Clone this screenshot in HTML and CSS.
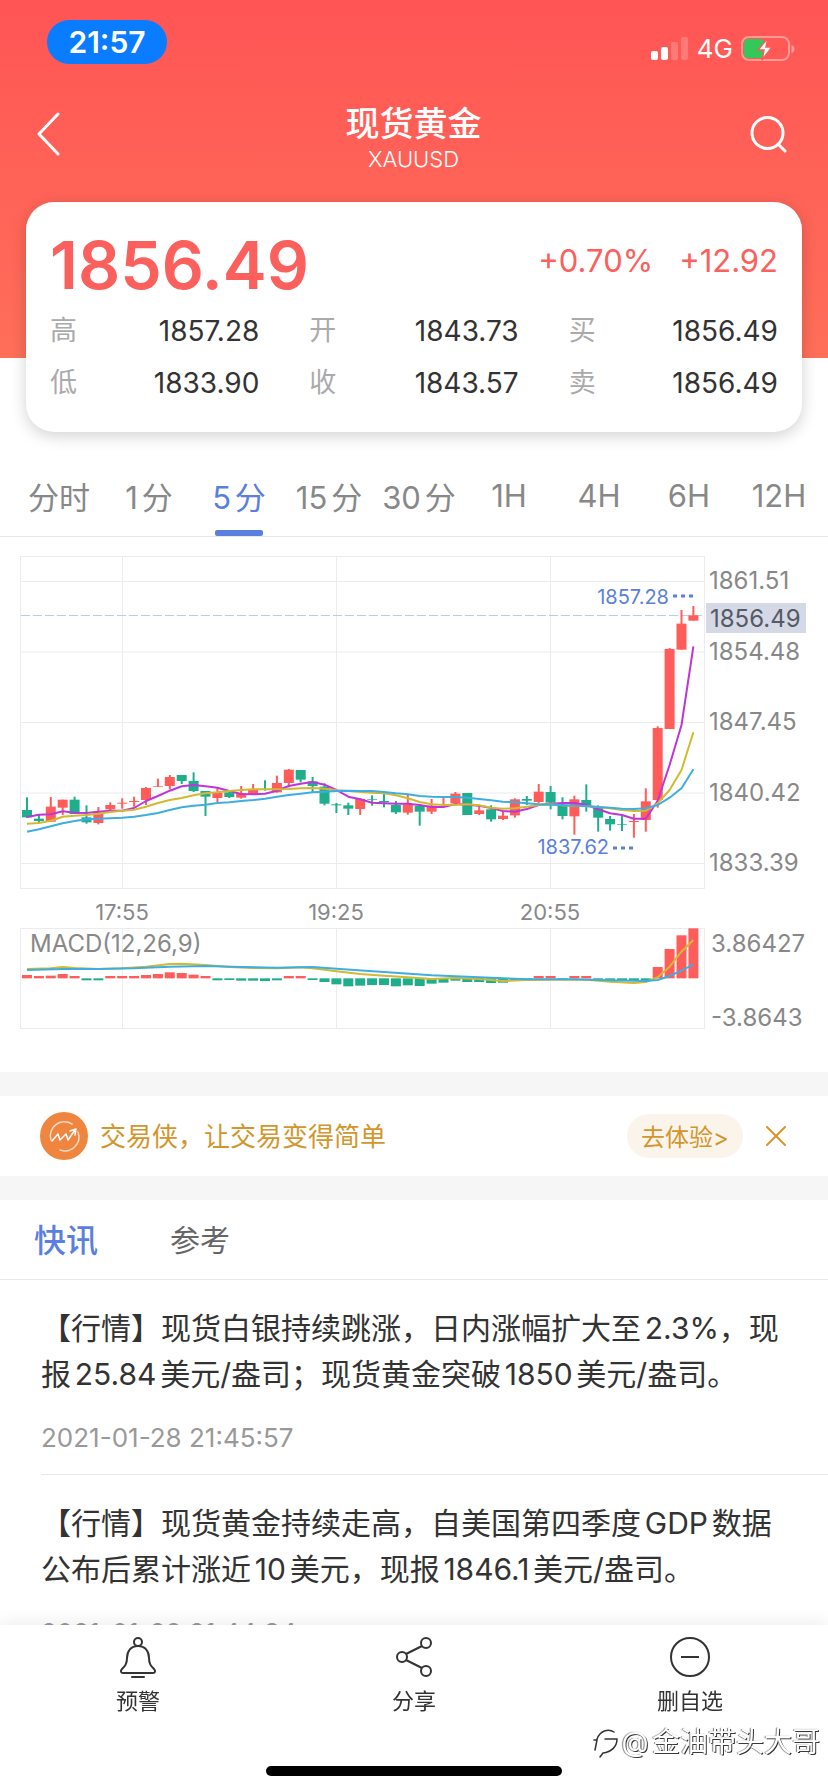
FILE: index.html
```html
<!DOCTYPE html>
<html lang="zh-CN">
<head>
    <meta charset="UTF-8">
    <meta name="viewport" content="width=device-width, initial-scale=1.0">
    <title>现货黄金 XAUUSD</title>
    <link rel="stylesheet" href="styles.css">
</head>
<body>
    <header class="top">
        <div class="status-bar">
            <span class="clock">21:57</span>
            <div class="status-icons">
                <svg width="38" height="24" viewBox="0 0 38 24" fill="#fff">
                    <rect x="0" y="14" width="7" height="9" rx="2"/>
                    <rect x="10" y="10" width="7" height="13" rx="2"/>
                    <rect x="20" y="5" width="7" height="18" rx="2" opacity=".2"/>
                    <rect x="30" y="0" width="7" height="23" rx="2" opacity=".2"/>
                </svg>
                <span class="network">4G</span>
                <svg width="54" height="26" viewBox="0 0 54 26">
                    <rect x="1" y="1" width="47" height="23" rx="7" fill="none" stroke="#fff" stroke-opacity=".4" stroke-width="2"/>
                    <rect x="3" y="3" width="20" height="19" rx="4" fill="#34c759"/>
                    <path d="M50.500 9v8q3-1 3-4t-3-4z" fill="#fff" opacity=".4"/>
                    <path d="M27 2 17 14h6l-2 10 10-13h-6z" fill="#fff" stroke="#ff5958" stroke-width="1.500"/>
                </svg>
            </div>
        </div>
        <nav class="nav-bar">
            <button class="icon-btn" type="button" aria-label="返回">
                <svg width="24" height="44" viewBox="0 0 24 44" fill="none" stroke="#fff" stroke-width="3" stroke-linecap="round" stroke-linejoin="round"><path d="M21 2 2 22l19 20"/></svg>
            </button>
            <div class="nav-title">
                <h1>现货黄金</h1>
                <p>XAUUSD</p>
            </div>
            <button class="icon-btn" type="button" aria-label="搜索">
                <svg width="38" height="38" viewBox="0 0 38 38" fill="none" stroke="#fff" stroke-width="3" stroke-linecap="round"><circle cx="17.500" cy="18" r="15.500"/><path d="m28 29 7 7"/></svg>
            </button>
        </nav>
    </header>

    <main>
        <section class="quote">
            <div class="quote-head">
                <strong class="price">1856.49</strong>
                <span class="change">+0.70%</span>
                <span class="change">+12.92</span>
            </div>
            <dl class="quote-grid">
                <div><dt>高</dt><dd>1857.28</dd></div>
                <div><dt>开</dt><dd>1843.73</dd></div>
                <div><dt>买</dt><dd>1856.49</dd></div>
                <div><dt>低</dt><dd>1833.90</dd></div>
                <div><dt>收</dt><dd>1843.57</dd></div>
                <div><dt>卖</dt><dd>1856.49</dd></div>
            </dl>
        </section>

        <div class="periods">
            <button type="button">分时</button>
            <button type="button">1分</button>
            <button type="button" class="active">5分</button>
            <button type="button">15分</button>
            <button type="button">30分</button>
            <button type="button">1H</button>
            <button type="button">4H</button>
            <button type="button">6H</button>
            <button type="button">12H</button>
        </div>

        <svg class="chart" viewBox="0 0 828 535">
            <g class="grid">
                <rect x="20.500" y="19.500" width="684" height="332"/>
                <path d="M21 44.500h683M21 115h683M21 185.500h683M21 256h683M21 326.500h683"/>
                <path d="M122.500 20v331M336.500 20v331M550.500 20v331"/>
                <rect x="20.500" y="391.500" width="684" height="100"/>
                <path d="M122.500 392v99M336.500 392v99M550.500 392v99"/>
            </g>
            <path class="last-line" d="M21 78.500h683"/>
            <g id="candles"></g>
            <g id="macd"></g>
            <g class="axis">
                <text x="709" y="52">1861.51</text>
                <text x="709" y="123">1854.48</text>
                <text x="709" y="193">1847.45</text>
                <text x="709" y="264">1840.42</text>
                <text x="709" y="334">1833.39</text>
                <rect class="last-box" x="706" y="66" width="100" height="30"/>
                <text class="last-text" x="710" y="90">1856.49</text>
                <text x="30" y="415">MACD(12,26,9)</text>
                <text x="711" y="415">3.86427</text>
                <text x="711" y="489">-3.8643</text>
            </g>
            <g class="times">
                <text x="122" y="383">17:55</text>
                <text x="336" y="383">19:25</text>
                <text x="550" y="383">20:55</text>
            </g>
            <g class="marks">
                <text x="669" y="67">1857.28</text>
                <path d="M673 59h20"/>
                <text x="609" y="317">1837.62</text>
                <path d="M613 311h20"/>
            </g>
        </svg>

        <aside class="promo">
            <svg width="48" height="48" viewBox="0 0 48 48" fill="none" stroke="#fff" stroke-linecap="round" stroke-linejoin="round">
                <circle cx="24" cy="24" r="24" fill="#f08540" stroke="none"/>
                <path d="M11 28A14 14 0 0 1 32 12M38 20A14 14 0 0 1 20 38" stroke-width="1.500" opacity=".7"/>
                <path d="m12 29 6-7 2 6 6-6 2 6L35 18M30 19l6-2-1 6" stroke-width="1.500"/>
            </svg>
            <p>交易侠，让交易变得简单</p>
            <button class="try-btn" type="button">去体验&gt;</button>
            <button class="icon-btn" type="button" aria-label="关闭">
                <svg width="20" height="20" viewBox="0 0 20 20" stroke="#d2962d" stroke-width="2" stroke-linecap="round"><path d="m1 1 18 18M19 1 1 19"/></svg>
            </button>
        </aside>

        <section class="news">
            <div class="news-tabs">
                <button type="button" class="active">快讯</button>
                <button type="button">参考</button>
            </div>
            <article class="news-item">
                <p>【行情】现货白银持续跳涨，日内涨幅扩大至2.3%，现报25.84美元/盎司；现货黄金突破1850美元/盎司。</p>
                <time>2021-01-28 21:45:57</time>
            </article>
            <article class="news-item">
                <p>【行情】现货黄金持续走高，自美国第四季度GDP数据公布后累计涨近10美元，现报1846.1美元/盎司。</p>
                <time>2021-01-28 21:44:34</time>
            </article>
        </section>
    </main>

    <footer class="toolbar">
        <div class="actions">
            <button type="button">
                <svg width="40" height="42" viewBox="0 0 40 42" fill="none" stroke="#333" stroke-width="2" stroke-linecap="round" stroke-linejoin="round"><circle cx="20" cy="6" r="4"/><path d="M20 10c-7 0-11 5-11 12 0 6-2 8-5 11-2 2-1 4 1 4h30c2 0 3-2 1-4-3-3-5-5-5-11 0-7-4-12-11-12zM14 41h12"/></svg>
                预警
            </button>
            <button type="button">
                <svg width="40" height="42" viewBox="0 0 40 42" fill="none" stroke="#333" stroke-width="2"><circle cx="8" cy="21" r="5"/><circle cx="32" cy="7" r="5"/><circle cx="32" cy="35" r="5"/><path d="m12 18 16-8M12 24l16 8"/></svg>
                分享
            </button>
            <button type="button">
                <svg width="40" height="42" viewBox="0 0 40 42" fill="none" stroke="#333" stroke-width="2"><circle cx="20" cy="21" r="19"/><path d="M11 21h18"/></svg>
                删自选
            </button>
        </div>
        <div class="home-indicator"></div>
        <div class="watermark">
            <svg width="26" height="32" viewBox="0 0 26 32" fill="none" stroke="#333" stroke-width="1.500" stroke-linecap="round"><path d="M2 24 4 14H1M4 13C7 5 15 2 21 6M12 13h12c0 8-6 13-14 14l-3 4"/></svg>
            @金油带头大哥
        </div>
    </footer>

    <script>
        // all y values are in thirds of a pixel
        const STEP = 11.9;
        const LEFT = 27;

        // [body top, body bottom, high, low, up]
        const candles = [
            [810,832,772,834,0],[836,843,825,850,0],[800,845,771,845,1],[779,803,779,825,1],[779,822,770,822,0],
            [832,847,796,851,0],[818,849,801,853,1],[795,808,787,812,1],[788,791,775,806,1],[783,786,770,800,1],
            [744,780,741,795,1],[739,741,716,741,1],[711,738,705,748,1],[705,723,705,732,0],[723,753,697,756,0],
            [753,770,753,828,0],[758,774,744,786,1],[757,771,755,774,0],[759,773,738,776,1],[750,762,732,765,1],
            [748,750,721,752,0],[729,757,707,758,1],[689,729,687,742,1],[690,719,690,727,0],[724,738,711,757,0],
            [740,791,730,796,0],[793,796,789,819,0],[796,806,788,825,0],[777,807,775,825,1],[777,779,766,797,0],
            [783,787,758,802,0],[795,817,783,822,0],[793,818,763,824,1],[797,815,795,857,0],[797,815,777,822,1],
            [792,794,770,796,1],[761,790,756,796,1],[759,825,759,825,0],[811,822,797,825,1],[808,838,796,845,0],
            [827,837,815,840,1],[778,826,775,833,1],[777,782,768,795,0],[755,786,732,790,1],[756,788,738,808,0],
            [797,828,772,838,0],[778,829,767,884,1],[780,796,733,815,0],[803,833,796,875,0],[837,853,828,872,0],
            [852,854,826,873,0],[843,846,822,893,1],[784,840,745,875,1],[564,780,559,803,1],[327,567,324,567,1],
            [251,329,210,329,1],[226,242,198,242,1]
        ];
        const ma5 = [831,824,823,814,818,819,815,812,812,804,783,768,752,739,735,739,743,753,762,763,761,752,738,731,726,734,750,770,778,788,790,791,791,795,801,801,792,794,797,804,813,815,807,795,791,789,789,794,808,820,825,836,836,782,675,555,319];
        const ma10 = [851,849,842,830,827,825,821,816,812,809,800,789,780,774,766,760,757,753,750,748,748,748,747,745,744,746,751,753,756,758,760,766,775,786,793,795,794,793,796,803,806,805,800,795,793,796,798,799,801,805,810,813,812,790,750,690,577];
        const ma20 = [875,868,859,850,843,838,836,835,833,830,825,819,810,802,797,794,789,787,783,780,776,770,765,761,757,755,753,752,753,753,756,760,763,768,770,771,771,773,777,781,785,787,790,793,794,795,797,798,801,803,806,807,805,795,773,745,688];

        const bars = [10,7,8,13,7,-6,-6,7,7,7,10,13,18,16,11,7,-6,-5,-7,-7,-8,-6,7,7,-5,-11,-18,-24,-22,-20,-20,-24,-21,-23,-16,-13,-7,-11,-11,-14,-13,-6,-4,7,7,-4,7,7,-5,-5,-5,-5,-5,34,88,129,150];
        // [index, y]
        const dif = [[0,207],[2,205],[3,201],[4,204],[6,207],[8,205],[10,200],[12,192],[13,191],[15,195],[17,201],[19,204],[21,205],[23,202],[24,205],[26,214],[28,222],[30,227],[32,232],[34,237],[36,234],[38,237],[40,243],[42,240],[44,239],[47,239],[49,245],[51,249],[52,246],[53,232],[54,200],[55,155],[56,120]];
        const dea = [[0,210],[3,207],[6,207],[9,205],[12,200],[15,198],[18,201],[21,203],[24,201],[26,206],[30,216],[34,226],[38,232],[42,238],[46,238],[49,241],[52,243],[53,240],[54,228],[55,212],[56,193]];

        const x = i => LEFT + i * STEP;
        const y = v => 3 + v / 3;
        const yMacd = v => 363 + v / 3;

        function line(points, scale, cls) {
            const list = points.map(p => x(p[0]).toFixed(1) + ',' + scale(p[1]).toFixed(1)).join(' ');
            return `<polyline class="line ${cls}" points="${list}"/>`;
        }

        function drawCandles() {
            let out = '';
            candles.forEach((c, i) => {
                const cls = c[4] ? 'up' : 'down';
                out += `<rect class="${cls}" x="${x(i) - 5}" y="${y(c[0])}" width="10" height="${(c[1] - c[0]) / 3}"/>`;
                out += `<rect class="${cls}" x="${x(i) - 1}" y="${y(c[2])}" width="2" height="${(c[3] - c[2]) / 3}"/>`;
            });
            out += line(ma5.map((v, i) => [i, v]), y, 'purple');
            out += line(ma10.map((v, i) => [i, v]), y, 'yellow');
            out += line(ma20.map((v, i) => [i, v]), y, 'blue');
            document.getElementById('candles').innerHTML = out;
        }

        function drawMacd() {
            let out = '';
            bars.forEach((v, i) => {
                const top = v > 0 ? 235 - v : 235;
                out += `<rect class="${v > 0 ? 'up' : 'down'}" x="${x(i) - 5}" y="${yMacd(top)}" width="10" height="${Math.abs(v) / 3}"/>`;
            });
            out += line(dif, yMacd, 'yellow');
            out += line(dea, yMacd, 'blue');
            document.getElementById('macd').innerHTML = out;
        }

        drawCandles();
        drawMacd();
    </script>
</body>
</html>
```
FILE: styles.css
```css
* {
    box-sizing: border-box;
}
body {
    margin: 0;
    padding-bottom: 110px;
    background-color: #fff;
    color: #333;
    font-family: Inter, "Noto Sans CJK SC", sans-serif;
    text-autospace: normal;
}
h1, p, dl, dd {
    margin: 0;
}
button {
    padding: 0;
    border: none;
    background: none;
    color: inherit;
    font: inherit;
    cursor: pointer;
}
svg {
    display: block;
}

/* header */
.top {
    height: 358px;
    padding-top: 20px;
    background: linear-gradient(#ff5555, #ff6f59);
    color: #fff;
}
.status-bar {
    display: flex;
    align-items: flex-start;
    justify-content: space-between;
    padding: 0 33px 0 47px;
}
.clock {
    width: 120px;
    border-radius: 22px;
    background-color: #0a7cff;
    font-size: 30px;
    font-weight: 600;
    line-height: 44px;
    text-align: center;
}
.status-icons {
    display: flex;
    align-items: center;
    gap: 8px;
    padding-top: 14px;
}
.network {
    font-size: 26px;
    line-height: 30px;
}
.nav-bar {
    display: flex;
    align-items: center;
    justify-content: space-between;
    margin-top: 32px;
    padding: 0 40px 0 37px;
}
.icon-btn {
    display: flex;
    align-items: center;
}
.nav-title {
    padding: 6px 0 0 16px;
    text-align: center;
}
.nav-title h1 {
    font-size: 34px;
    font-weight: 500;
    line-height: 44px;
}
.nav-title p {
    font-size: 22px;
    font-weight: 300;
    line-height: 26px;
}

/* quote card */
.quote {
    position: relative;
    height: 230px;
    margin: -156px 26px 0;
    padding: 23px 24px 24px;
    border-radius: 28px;
    background-color: #fff;
    box-shadow: 0 4px 16px rgba(0,0,0,0.18);
}
.quote-head {
    display: flex;
    align-items: center;
    gap: 26px;
    color: #fb605c;
}
.price {
    margin-right: auto;
    font-size: 66px;
    font-weight: 600;
    line-height: 80px;
}
.change {
    font-size: 31px;
    line-height: 72px;
    align-self: flex-start;
}
.quote-grid {
    display: grid;
    grid-template-columns: repeat(3, 1fr);
    column-gap: 50px;
}
.quote-grid div {
    display: flex;
    justify-content: space-between;
    font-size: 28px;
    line-height: 52px;
}
.quote-grid dt {
    color: #aaa;
    font-size: 27px;
}

/* period tabs */
.periods {
    display: grid;
    grid-template-columns: repeat(9, 1fr);
    margin-top: 28px;
    padding: 0 4px 0 14px;
    border-bottom: 1px solid #e6e6e6;
    color: #888;
    font-size: 31px;
}
.periods button {
    position: relative;
    height: 76px;
    padding-bottom: 6px;
    white-space: nowrap;
}
.periods .active {
    color: #5b7fde;
}
.periods .active::after {
    content: "";
    position: absolute;
    bottom: 0;
    left: 50%;
    width: 48px;
    height: 6px;
    margin-left: -24px;
    border-radius: 2px;
    background-color: #5b7fde;
}

/* chart */
.chart {
    width: 100%;
    height: auto;
}
.grid {
    fill: none;
    stroke: #ececee;
}
.last-line {
    stroke: #b4cfe8;
    stroke-dasharray: 9 3;
}
.up {
    fill: #ff5c5a;
}
.down {
    fill: #1fae8c;
}
.line {
    fill: none;
    stroke-width: 2;
    stroke-linejoin: round;
}
.purple {
    stroke: #bf35dc;
}
.yellow {
    stroke: #d2b932;
}
.blue {
    stroke: #3eaee0;
}
.axis {
    fill: #888;
    font-size: 24px;
}
.axis .last-box {
    fill: #d5d9e5;
}
.axis .last-text {
    fill: #555a66;
}
.times {
    fill: #888;
    font-size: 22px;
    text-anchor: middle;
}
.marks {
    fill: #5b7fde;
    font-size: 20px;
    text-anchor: end;
}
.marks path {
    stroke: #5b7fde;
    stroke-width: 3;
    stroke-dasharray: 4 4;
}

/* promo */
.promo {
    display: flex;
    align-items: center;
    height: 128px;
    padding: 0 42px 0 40px;
    border: solid #f6f6f6;
    border-width: 24px 0;
    color: #d2962d;
}
.promo p {
    flex: 1;
    padding: 0 0 4px 12px;
    font-size: 26px;
}
.try-btn {
    width: 116px;
    height: 44px;
    margin-right: 23px;
    padding-bottom: 2px;
    border-radius: 22px;
    background-color: #faf4ea;
    font-size: 24px;
}

/* news */
.news-tabs {
    display: flex;
    align-items: center;
    gap: 72px;
    height: 80px;
    padding: 0 0 4px 34px;
    border-bottom: 1px solid #e8e8e8;
    color: #666;
    font-size: 30px;
}
.news-tabs .active {
    color: #5b7fde;
    font-size: 32px;
    font-weight: 500;
}
.news-item {
    margin-left: 41px;
    padding: 25px 36px 21px 0;
    border-bottom: 1px solid #e8e8e8;
}
.news-item p {
    font-size: 30px;
    line-height: 46px;
}
.news-item time {
    display: block;
    margin-top: 25px;
    color: #999;
    font-size: 26px;
    line-height: 31px;
}

/* bottom toolbar */
.toolbar {
    position: fixed;
    right: 0;
    bottom: 0;
    left: 0;
    padding: 11px 0 16px;
    background-color: #fff;
    box-shadow: 0 -2px 16px rgba(0,0,0,0.08);
}
.actions {
    display: grid;
    grid-template-columns: repeat(3, 1fr);
    height: 130px;
}
.actions button {
    display: flex;
    flex-direction: column;
    align-items: center;
    gap: 7px;
    font-size: 22px;
    line-height: 32px;
}
.home-indicator {
    width: 296px;
    height: 10px;
    margin: 0 auto;
    border-radius: 5px;
    background-color: #000;
}
.watermark {
    position: absolute;
    right: 8px;
    bottom: 30px;
    display: flex;
    align-items: center;
    gap: 2px;
    color: #fff;
    font-size: 28px;
    line-height: 40px;
    text-shadow: -1px 0 1px #777, 1px 1px 0 #333;
}
```
